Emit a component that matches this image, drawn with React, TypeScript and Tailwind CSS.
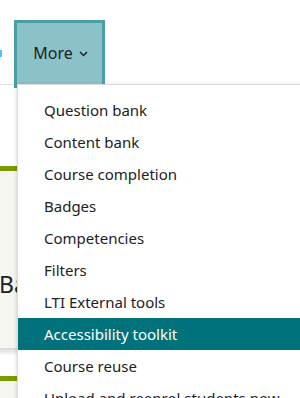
import React from "react";

const items = [
  "Question bank",
  "Content bank",
  "Course completion",
  "Badges",
  "Competencies",
  "Filters",
  "LTI External tools",
  "Accessibility toolkit",
  "Course reuse",
  "Upload and reenrol students now",
];

export default function App() {
  return (
    <div
      className="relative w-[300px] h-[398px] overflow-hidden bg-white text-[#1d2125]"
      style={{ fontFamily: '"Segoe UI", "Noto Sans", "Open Sans", sans-serif' }}
    >
      {/* top nav row */}
      <div className="relative h-[85px] border-b border-[#dee2e6]">
        <div className="absolute left-0 top-[50px] h-[7px] w-[2px] bg-[#4fc3f7]" />
        <div className="absolute left-[14px] top-[20px] w-[91px] h-[68px] border-[3px] border-b-0 border-[#4a9ea6] bg-[#8bc1c8] flex items-start justify-center pt-[18px]">
          <span className="text-[16px] leading-[24px] flex items-center gap-[6px] pl-[2px]">
            More
            <svg width="9" height="6" viewBox="0 0 9 6" className="mt-[1px]">
              <path d="M1 1 L4.5 4.5 L8 1" fill="none" stroke="#1d2125" strokeWidth="1.5" />
            </svg>
          </span>
        </div>
      </div>

      {/* background content below */}
      <div className="flex flex-col">
        <div className="h-[81px]" />
        <div className="h-[5px] bg-[#7a9a01]" />
        <div className="h-[177px] bg-[#f6f6f0] flex flex-col">
          <div className="h-[98px]" />
          <div className="text-[23px] leading-[30px] -ml-[1px]">Basic</div>
        </div>
        <div className="h-[8px] bg-gradient-to-b from-[#d8d8d8] to-white" />
        <div className="h-[20px]" />
        <div className="h-[5px] bg-[#7a9a01]" />
        <div className="h-[40px] bg-[#f6f6f0]" />
      </div>

      {/* dropdown menu overlay */}
      <div className="absolute left-[17px] top-[84px] w-[300px] bg-white border-l border-t border-[#dcdcdc] shadow-[-1px_0_3px_rgba(0,0,0,0.12)] pt-[9px]">
        {items.map((t) => (
          <div
            key={t}
            className={
              "h-[32px] pl-[26px] flex items-center text-[15px] whitespace-nowrap " +
              (t === "Accessibility toolkit" ? "bg-[#00727b] text-white" : "")
            }
          >
            {t}
          </div>
        ))}
      </div>
    </div>
  );
}
